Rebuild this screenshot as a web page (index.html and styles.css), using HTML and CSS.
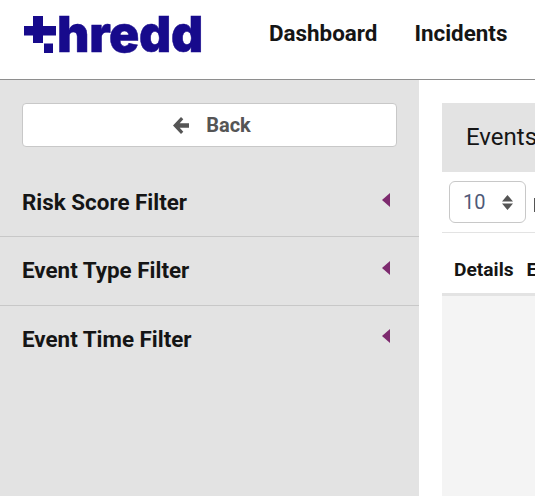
FILE: index.html
```html
<!DOCTYPE html>
<html lang="en">
<head>
<meta charset="utf-8">
<title>Thredd</title>
<link rel="stylesheet" href="styles.css">
</head>
<body>
<header class="topbar">
  <a class="logo" href="#">
    <svg class="logo-mark" width="33" height="37" viewBox="0 0 33 37" aria-hidden="true">
      <path d="M9 0h10v10h13v9.500H19V27H9V19.500H0V10h9z" fill="#170a8c"/>
      <rect x="20" y="27.500" width="9" height="9.500" fill="#170a8c"/>
    </svg>
    <span class="logo-word">hredd</span>
  </a>
  <nav class="nav">
    <a class="nav-link" href="#">Dashboard</a>
    <a class="nav-link" href="#">Incidents</a>
  </nav>
</header>
<div class="layout">
  <aside class="sidebar">
    <div class="back-wrap">
      <button class="back-btn" type="button">
        <svg width="16" height="17" viewBox="0 0 16 17" aria-hidden="true"><path d="M8 0 10.300 2.300 6.700 6.200H16v4.600H6.700L10.300 14.700 8 17 0 8.500z" fill="#555"/></svg>
        <span>Back</span>
      </button>
    </div>
    <section class="filter"><h2>Risk Score Filter</h2><i class="caret"></i></section>
    <section class="filter"><h2>Event Type Filter</h2><i class="caret"></i></section>
    <section class="filter"><h2>Event Time Filter</h2><i class="caret"></i></section>
  </aside>
  <main class="content">
    <div class="panel-title">Events</div>
    <div class="controls">
      <div class="select"><span>10</span>
        <svg width="11" height="15" viewBox="0 0 11 15" aria-hidden="true"><path d="M5.500 0 11 6.500H0zM0 8.500H11L5.500 15z" fill="#555"/></svg>
      </div>
      <span class="box-edge"></span>
    </div>
    <div class="table-head"><span>Details</span><span>Event</span></div>
    <div class="table-body"></div>
  </main>
</div>
</body>
</html>
```
FILE: styles.css
```css
* { box-sizing: border-box; }
html, body { height: 100%; }
body {
  margin: 0;
  width: 535px;
  height: 496px;
  overflow: hidden;
  background: #fff;
  font-family: Roboto, "Liberation Sans", sans-serif;
  color: #151515;
  display: flex;
  flex-direction: column;
}
.topbar {
  height: 80px;
  flex: none;
  display: flex;
  align-items: flex-start;
  border-bottom: 1px solid #8e8e8e;
  white-space: nowrap;
  overflow: hidden;
}
.logo {
  display: flex;
  align-items: flex-start;
  margin: 16px 0 0 24px;
  width: 245px;
  color: #170a8c;
  text-decoration: none;
}
.logo-mark { flex: none; }
.logo-word {
  font-family: Inter, Roboto, sans-serif;
  font-size: 50px;
  font-weight: 900;
  line-height: 37px;
  letter-spacing: -0.300px;
  -webkit-text-stroke: 0.5px #170a8c;
}
.nav { display: flex; gap: 37px; padding-top: 20px; }
.nav-link {
  font-size: 22.400px;
  font-weight: 700;
  line-height: 26px;
  color: #151515;
  text-decoration: none;
}
.layout { flex: 1; display: flex; min-height: 0; }
.sidebar { width: 419px; flex: none; background: #e3e3e3; }
.back-wrap { padding: 23px 22px 21.500px; }
.back-btn {
  width: 375px;
  height: 44px;
  display: flex;
  align-items: center;
  justify-content: center;
  gap: 17px;
  background: #fff;
  border: 1px solid #c8c8c8;
  border-radius: 4px;
  font: 700 20px Roboto, sans-serif;
  color: #555;
  padding: 0 0 0 5px;
}
.filter {
  height: 68.500px;
  display: flex;
  align-items: center;
  justify-content: space-between;
  padding: 0 29px 0 22px;
  border-bottom: 1px solid #c8c8c8;
}
.filter:last-child { border-bottom: 0; }
.filter h2 {
  margin: 0;
  font-size: 22.400px;
  font-weight: 700;
  line-height: 26px;
  color: #151515;
}
.filter + .filter h2 { margin-top: -2px; }
.caret {
  width: 0;
  height: 0;
  border-style: solid;
  border-width: 7px 8px 7px 0;
  border-color: transparent #7d2a6e transparent transparent;
  margin-top: -5px;
}
.filter:last-child .caret { margin-top: -7px; }
.content {
  flex: 1;
  min-width: 0;
  padding: 23px 0 0 23px;
  display: flex;
  flex-direction: column;
  overflow: hidden;
}
.panel-title {
  height: 69px;
  flex: none;
  background: #e3e3e3;
  padding-left: 24px;
  font-size: 24px;
  line-height: 69px;
  color: #151515;
}
.controls {
  height: 61px;
  flex: none;
  display: flex;
  align-items: flex-start;
  padding: 9px 0 0 7px;
  gap: 8px;
  border-bottom: 1px solid #e3e3e3;
}
.select {
  flex: none;
  width: 77px;
  height: 42px;
  display: flex;
  align-items: center;
  justify-content: space-between;
  padding: 0 12px 0 13px;
  border: 1px solid #c8c8c8;
  border-radius: 6px;
  font-size: 20px;
  color: #4f5a78;
}
.box-edge {
  width: 2px;
  height: 14px;
  margin-top: 17px;
  background: #555;
}
.table-head {
  height: 63px;
  flex: none;
  display: flex;
  align-items: center;
  gap: 13px;
  padding: 13px 0 0 12px;
  font-size: 19.200px;
  font-weight: 700;
  border-bottom: 3px solid #e3e3e3;
  white-space: nowrap;
}
.table-body { flex: 1; background: #f4f4f4; }
```
